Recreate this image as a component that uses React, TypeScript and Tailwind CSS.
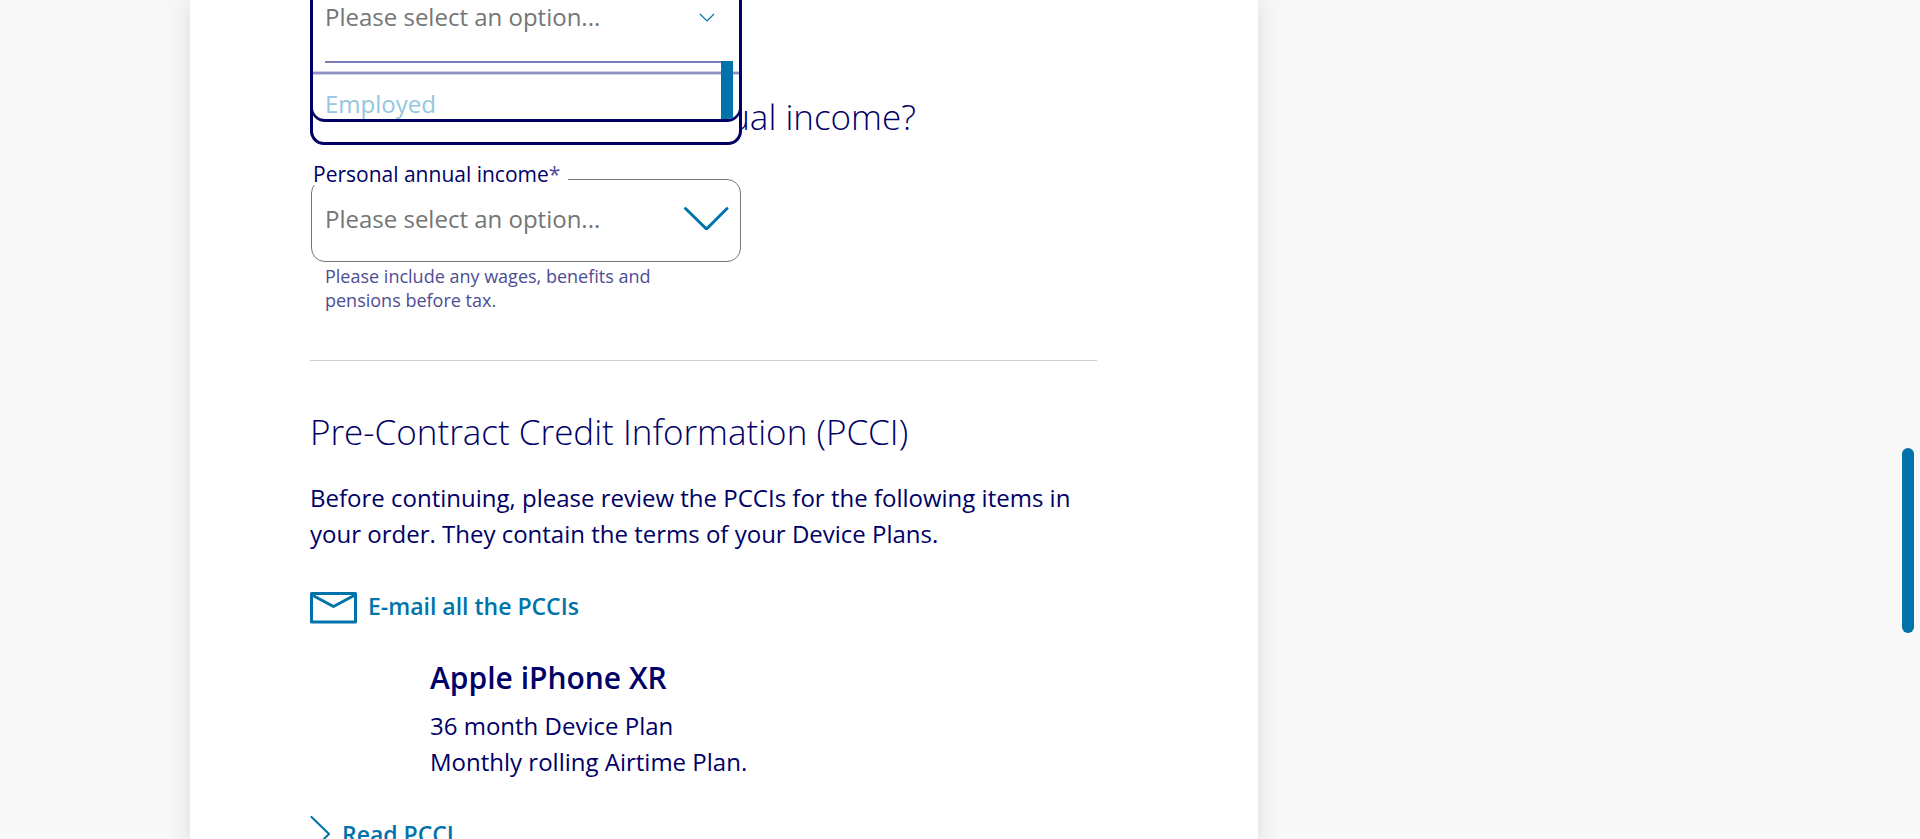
import { useState } from "react";

const incomeBands = ["Up to £10,000", "£10,001 - £20,000", "£20,001 - £35,000", "Over £35,000"];

function EmploymentSelect() {
  const [open, setOpen] = useState(true);
  return (
    <div className="absolute left-0 top-0 z-10 h-[145px] w-[432px] rounded-b-[14px] border-[3px] border-t-0 border-[#000066] bg-white">
      <div className="relative -mx-[2px] h-[122px] overflow-hidden rounded-b-[14px] border-x-2 border-b-[3px] border-[#000066]">
        <button
          type="button"
          aria-expanded={open}
          onClick={() => setOpen(!open)}
          className="flex h-[61px] w-full items-start justify-between pl-3 pr-6 text-left text-[24px] leading-[34px] text-[#757575]"
        >
          <span>Please select an option...</span>
          <svg className="mt-[13px] h-[9px] w-4" viewBox="0 0 16 9" fill="none" stroke="#0073aa" strokeWidth="1.2" aria-hidden="true">
            <path d="M1 1 8 8 15 1" />
          </svg>
        </button>
        {open && (
          <div className="relative">
            <div className="ml-3 mr-2 h-[2px] bg-[#7a7ab8]" />
            <div className="mt-2 h-1 border-y border-[#d0d0e6] bg-[#9090c4]" />
            <ul role="listbox" aria-label="Employment status" className="pl-3 pt-[11px] text-[24px] leading-9 text-[#94c6df]">
              <li role="option" aria-selected="false">Employed</li>
            </ul>
            <div className="absolute right-[6px] top-0 h-[59px] w-3 bg-[#0073aa]" />
          </div>
        )}
      </div>
    </div>
  );
}

export default function App() {
  return (
    <div className="h-screen overflow-hidden bg-[#f8f8f8] font-['Open_Sans','Noto_Sans',sans-serif] text-[#000066]">
      <main className="ml-[190px] min-h-full max-w-[1068px] bg-white pl-[120px] pr-[161px] shadow-[0_0_24px_rgba(0,0,0,0.12)]">
        <div className="relative">
          <EmploymentSelect />
          <section className="pt-[95px]">
            <h2 className="w-[606px] whitespace-nowrap text-right text-[35px] font-light leading-[44px]">What is your personal annual income?</h2>
            <div className="relative ml-px mt-10 w-[430px]">
              <label htmlFor="income" className="absolute -left-px -top-4 bg-white pl-[3px] pr-2 text-[21px] leading-[22px]">
                Personal annual income<span className="text-[#4d4d94]">*</span>
              </label>
              <select
                id="income"
                defaultValue=""
                className="block h-[83px] w-full appearance-none rounded-[14px] border border-[#757575] bg-white pb-1 pl-[13px] text-[24px] text-[#757575]"
              >
                <option value="">Please select an option...</option>
                {incomeBands.map((band) => (
                  <option key={band}>{band}</option>
                ))}
              </select>
              <svg className="pointer-events-none absolute right-3 top-[27px] h-6 w-[46px]" viewBox="0 0 46 24" fill="none" stroke="#0073aa" strokeWidth="3" strokeLinecap="round" aria-hidden="true">
                <path d="M2.5 2.500 23.500 23 44 2.500" />
              </svg>
            </div>
            <p className="w-[400px] pl-[15px] pr-8 pt-[2px] text-[18px] leading-6 text-[#4d4d94]">
              Please include any wages, benefits and pensions before tax.
            </p>
          </section>
        </div>
        <hr className="mt-12 border-[#cfcfcf]" />
        <section>
          <h2 className="mt-[49px] text-[35px] font-light leading-[44px]">Pre-Contract Credit Information (PCCI)</h2>
          <p className="mt-[26px] text-[24px] leading-9">
            Before continuing, please review the PCCIs for the following items in your order. They contain the terms of your Device Plans.
          </p>
          <a href="#email" className="mt-9 flex items-center gap-[11px] text-[23px] font-semibold leading-9 text-[#0073aa]">
            <svg className="mt-1 h-8 w-[47px]" viewBox="0 0 47 32" fill="none" stroke="currentColor" strokeWidth="3" strokeLinejoin="round" aria-hidden="true">
              <rect x="1.500" y="1.500" width="44" height="28.500" />
              <path d="M2 3 23.500 14.500 45 3" />
            </svg>
            E-mail all the PCCIs
          </a>
          <div className="mt-[34px] pl-[120px]">
            <h3 className="text-[30px] font-semibold leading-10">Apple iPhone XR</h3>
            <p className="mt-[10px] text-[24px] leading-9">
              36 month Device Plan
              <br />
              Monthly rolling Airtime Plan.
            </p>
          </div>
          <a href="#read" className="mt-9 flex items-start gap-3 text-[23px] font-semibold leading-9 text-[#0073aa]">
            <svg className="h-9 w-5" viewBox="0 0 20 36" fill="none" stroke="currentColor" strokeWidth="2" strokeLinecap="round" aria-hidden="true">
              <path d="M1.500 1 19 18 1.500 35" />
            </svg>
            Read PCCI
          </a>
        </section>
      </main>
      <div className="fixed right-[6px] top-[448px] h-[185px] w-3 rounded-full bg-[#0073aa]" />
    </div>
  );
}
